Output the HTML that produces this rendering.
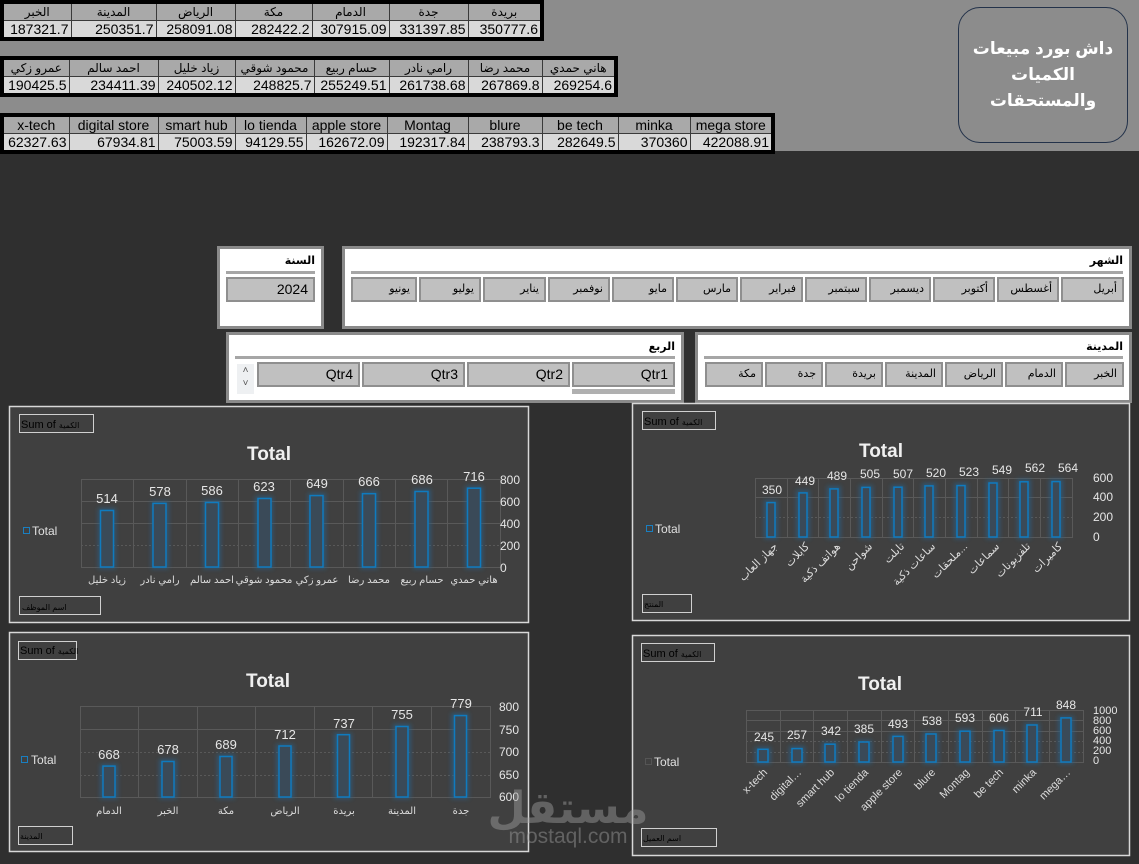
<!DOCTYPE html>
<html><head><meta charset="utf-8">
<style>
*{margin:0;padding:0;box-sizing:border-box}
body{width:1139px;height:864px;background:#2f2f2f;position:relative;overflow:hidden;font-family:"Liberation Sans","DejaVu Sans",sans-serif}
.band{position:absolute;left:0;top:0;width:1139px;height:151px;background:#8c8c8c}
table{position:absolute;border-collapse:collapse;table-layout:fixed;border:4px solid #000;background:#000}
td{border:1px solid #3a3a3a;height:18px;padding:0 2px;font-size:14px;line-height:16px;white-space:nowrap;overflow:hidden;color:#000}
tr.h td{background:#a9a9a9;text-align:center;font-size:12px}
tr.v td{background:#d9d9d9;text-align:right}
tr.h.e td{font-size:14px}
.title{position:absolute;left:958px;top:7px;width:170px;height:136px;border:1px solid #23324a;border-radius:22px;color:#fff;font-weight:bold;font-size:17px;text-align:center;line-height:26px;padding-top:28px}
.sl{position:absolute;background:#fff;border:3px solid #8a8a8a}
.sl .hd{position:absolute;right:6px;top:5px;font-size:11px;font-weight:bold}
.sl .ln{position:absolute;left:6px;right:6px;height:3px;background:#a6a6a6}
.b{position:absolute;height:25px;background:#c0c0c0;border:2px solid #8f8f8f;font-size:11px;text-align:right;padding-right:5px;line-height:20px}
.b.q{font-size:14px}
</style></head><body>
<div class="band"></div>

<table style="left:0;top:0;width:544px">
<colgroup><col style="width:69px"><col style="width:85px"><col style="width:79px"><col style="width:77px"><col style="width:77px"><col style="width:79px"><col style="width:74px"></colgroup>
<tr class="h"><td>الخبر</td><td>المدينة</td><td>الرياض</td><td>مكة</td><td>الدمام</td><td>جدة</td><td>بريدة</td></tr>
<tr class="v"><td>187321.7</td><td>250351.7</td><td>258091.08</td><td>282422.2</td><td>307915.09</td><td>331397.85</td><td>350777.6</td></tr>
</table>

<table style="left:0;top:56px;width:616px">
<colgroup><col style="width:67px"><col style="width:89px"><col style="width:77px"><col style="width:79px"><col style="width:75px"><col style="width:79px"><col style="width:74px"><col style="width:74px"></colgroup>
<tr class="h"><td>عمرو زكي</td><td>احمد سالم</td><td>زياد خليل</td><td>محمود شوقي</td><td>حسام ربيع</td><td>رامي نادر</td><td>محمد رضا</td><td>هاني حمدي</td></tr>
<tr class="v"><td>190425.5</td><td>234411.39</td><td>240502.12</td><td>248825.7</td><td>255249.51</td><td>261738.68</td><td>267869.8</td><td>269254.6</td></tr>
</table>

<table style="left:0;top:113px;width:773px">
<colgroup><col style="width:67px"><col style="width:89px"><col style="width:77px"><col style="width:71px"><col style="width:81px"><col style="width:81px"><col style="width:74px"><col style="width:76px"><col style="width:72px"><col style="width:83px"></colgroup>
<tr class="h e"><td>x-tech</td><td>digital store</td><td>smart hub</td><td>lo tienda</td><td>apple store</td><td>Montag</td><td>blure</td><td>be tech</td><td>minka</td><td>mega store</td></tr>
<tr class="v"><td>62327.63</td><td>67934.81</td><td>75003.59</td><td>94129.55</td><td>162672.09</td><td>192317.84</td><td>238793.3</td><td>282649.5</td><td>370360</td><td>422088.91</td></tr>
</table>

<div class="title">داش بورد مبيعات<br>الكميات<br>والمستحقات</div>

<div class="sl" style="left:217px;top:246px;width:107px;height:83px">
<div class="hd">السنة</div><div class="ln" style="top:22px"></div>
<div class="b q" style="left:6px;top:28px;width:89px">2024</div>
</div>
<div class="sl" style="left:342px;top:246px;width:790px;height:83px">
<div class="hd">الشهر</div><div class="ln" style="top:22px"></div>
<div class="b" style="left:716px;top:28px;width:63px">أبريل</div>
<div class="b" style="left:652px;top:28px;width:62px">أغسطس</div>
<div class="b" style="left:588px;top:28px;width:62px">أكتوبر</div>
<div class="b" style="left:524px;top:28px;width:62px">ديسمبر</div>
<div class="b" style="left:460px;top:28px;width:62px">سبتمبر</div>
<div class="b" style="left:395px;top:28px;width:63px">فبراير</div>
<div class="b" style="left:331px;top:28px;width:62px">مارس</div>
<div class="b" style="left:267px;top:28px;width:62px">مايو</div>
<div class="b" style="left:203px;top:28px;width:62px">نوفمبر</div>
<div class="b" style="left:138px;top:28px;width:63px">يناير</div>
<div class="b" style="left:74px;top:28px;width:62px">يوليو</div>
<div class="b" style="left:6px;top:28px;width:66px">يونيو</div>
</div>
<div class="sl" style="left:226px;top:332px;width:458px;height:71px">
<div class="hd">الربع</div><div class="ln" style="top:21px"></div>
<div style="position:absolute;left:8px;top:29px;width:17px;height:30px;background:#eef0f2;font-size:10px;color:#555;text-align:center;line-height:13px">˄<br>˅</div>
<div class="b q" style="left:343px;top:27px;width:103px">Qtr1</div>
<div class="b q" style="left:238px;top:27px;width:103px">Qtr2</div>
<div class="b q" style="left:133px;top:27px;width:103px">Qtr3</div>
<div class="b q" style="left:28px;top:27px;width:103px">Qtr4</div>
<div style="position:absolute;left:343px;top:54px;width:103px;height:5px;background:#b0b0b0"></div>
</div>
<div class="sl" style="left:695px;top:332px;width:437px;height:71px">
<div class="hd">المدينة</div><div class="ln" style="top:21px"></div>
<div class="b" style="left:367px;top:27px;width:59px">الخبر</div>
<div class="b" style="left:307px;top:27px;width:58px">الدمام</div>
<div class="b" style="left:247px;top:27px;width:58px">الرياض</div>
<div class="b" style="left:187px;top:27px;width:58px">المدينة</div>
<div class="b" style="left:127px;top:27px;width:58px">بريدة</div>
<div class="b" style="left:67px;top:27px;width:58px">جدة</div>
<div class="b" style="left:7px;top:27px;width:58px">مكة</div>
</div>

<svg style="position:absolute;left:0;top:0" width="1139" height="864" font-family="Liberation Sans, DejaVu Sans, sans-serif">
<defs><filter id="g" x="-100%" y="-20%" width="300%" height="140%"><feGaussianBlur stdDeviation="2"/></filter></defs>
<g fill="#404040" stroke="#d8d8d8" stroke-width="1.5">
<rect x="9.5" y="406.5" width="519" height="216"/>
<rect x="632.5" y="403.5" width="497" height="217"/>
<rect x="9.5" y="632.5" width="519" height="219"/>
<rect x="632.5" y="635.5" width="497" height="220"/>
</g>
<g fill="none" stroke="#d0d0d0" stroke-width="1">
<rect x="19.5" y="414.5" width="74" height="18"/><rect x="19.5" y="596.5" width="81" height="18"/>
<rect x="642.5" y="411.5" width="73" height="18"/><rect x="642.5" y="594.5" width="49" height="18"/>
<rect x="18.5" y="641.5" width="58" height="18"/><rect x="18.5" y="826.5" width="54" height="18"/>
<rect x="641.5" y="643.5" width="73" height="18"/><rect x="641.5" y="828.5" width="75" height="18"/>
</g>
<g font-size="11" fill="#000">
<text x="21" y="428">Sum of <tspan font-size="8">الكمية</tspan></text>
<text x="22" y="610" font-size="8">اسم الموظف</text>
<text x="644" y="425">Sum of <tspan font-size="8">الكمية</tspan></text>
<text x="644" y="607" font-size="8">المنتج</text>
<text x="20" y="654">Sum of <tspan font-size="8">الكمية</tspan></text>
<text x="20" y="839" font-size="8">المدينة</text>
<text x="643" y="657">Sum of <tspan font-size="8">الكمية</tspan></text>
<text x="643" y="841" font-size="8">اسم العميل</text>
</g>
<g font-weight="bold" font-size="19" fill="#f0f0f0" text-anchor="middle">
<text x="269" y="460">Total</text><text x="881" y="457">Total</text>
<text x="268" y="687">Total</text><text x="880" y="690">Total</text>
</g>
<g font-size="12" fill="#e0e0e0">
<rect x="23.5" y="527.5" width="6" height="6" fill="none" stroke="#1a7fc0"/><text x="32" y="535">Total</text>
<rect x="646.5" y="525.5" width="6" height="6" fill="none" stroke="#1a7fc0"/><text x="655" y="533">Total</text>
<rect x="21.5" y="756.5" width="6" height="6" fill="none" stroke="#1a7fc0"/><text x="31" y="764">Total</text>
<rect x="645.5" y="758.5" width="6" height="6" fill="none" stroke="#555"/><text x="654" y="766">Total</text>
</g>

<g stroke="#595959" stroke-width="1" fill="none">
<rect x="81.5" y="479.5" width="419" height="88"/>
<line x1="81" y1="501.5" x2="500" y2="501.5"/><line x1="81" y1="523.5" x2="500" y2="523.5"/><line x1="81" y1="545.5" x2="500" y2="545.5" stroke-dasharray="2,2"/>
<path d="M133.5 479V567M186.5 479V567M238.5 479V567M290.5 479V567M343.5 479V567M395.5 479V567M447.5 479V567"/>
</g>
<g fill="#2a5f85" filter="url(#g)" opacity=".7">
<rect x="98" y="508" width="18" height="61"/><rect x="151" y="501" width="18" height="68"/><rect x="203" y="500" width="18" height="69"/><rect x="255" y="496" width="18" height="73"/><rect x="308" y="493" width="18" height="76"/><rect x="360" y="491" width="18" height="78"/><rect x="413" y="489" width="18" height="80"/><rect x="465" y="486" width="18" height="83"/>
</g>
<g fill="#3a4a58" stroke="#0f7bbf" stroke-width="1.5">
<rect x="100.5" y="510.5" width="13" height="56.5"/><rect x="153" y="503.4" width="13" height="63.6"/><rect x="205.5" y="502.5" width="13" height="64.5"/><rect x="258" y="498.5" width="13" height="68.5"/><rect x="310" y="495.6" width="13" height="71.4"/><rect x="362.5" y="493.7" width="13" height="73.3"/><rect x="415" y="491.5" width="13" height="75.5"/><rect x="467.5" y="488.2" width="13" height="78.8"/>
</g>
<g font-size="13" fill="#e6e6e6" text-anchor="middle">
<text x="107" y="503">514</text><text x="160" y="496">578</text><text x="212" y="495">586</text><text x="264" y="491">623</text><text x="317" y="488">649</text><text x="369" y="486">666</text><text x="422" y="484">686</text><text x="474" y="481">716</text>
</g>
<g font-size="12" fill="#e6e6e6">
<text x="500" y="484">800</text><text x="500" y="506">600</text><text x="500" y="528">400</text><text x="500" y="550">200</text><text x="500" y="572">0</text>
</g>
<g font-size="10" fill="#dcdcdc" text-anchor="middle">
<text x="107" y="583">زياد خليل</text><text x="160" y="583">رامي نادر</text><text x="212" y="583">احمد سالم</text><text x="264" y="583">محمود شوقي</text><text x="317" y="583">عمرو زكي</text><text x="369" y="583">محمد رضا</text><text x="422" y="583">حسام ربيع</text><text x="474" y="583">هاني حمدي</text>
</g>

<g stroke="#595959" stroke-width="1" fill="none">
<rect x="755.5" y="478.5" width="317" height="59"/>
<line x1="755" y1="497.5" x2="1072" y2="497.5"/><line x1="755" y1="517.5" x2="1072" y2="517.5" stroke-dasharray="2,2"/>
<path d="M787.5 478V537M818.5 478V537M850.5 478V537M882.5 478V537M913.5 478V537M945.5 478V537M977.5 478V537M1008.5 478V537M1040.5 478V537"/>
</g>
<g fill="#2a5f85" filter="url(#g)" opacity=".7">
<rect x="764" y="500" width="14" height="39"/><rect x="796" y="490" width="14" height="49"/><rect x="827" y="486" width="14" height="53"/><rect x="859" y="485" width="14" height="54"/><rect x="891" y="485" width="14" height="54"/><rect x="922" y="483" width="14" height="56"/><rect x="954" y="483" width="14" height="56"/><rect x="986" y="480" width="14" height="59"/><rect x="1017" y="479" width="14" height="60"/><rect x="1049" y="479" width="14" height="60"/>
</g>
<g fill="#3a4a58" stroke="#0f7bbf" stroke-width="1.5">
<rect x="767" y="502.6" width="8" height="34.4"/><rect x="799" y="492.9" width="8" height="44.1"/><rect x="830" y="488.9" width="8" height="48.1"/><rect x="862" y="487.4" width="8" height="49.6"/><rect x="894" y="487.2" width="8" height="49.8"/><rect x="925" y="485.9" width="8" height="51.1"/><rect x="957" y="485.6" width="8" height="51.4"/><rect x="989" y="483" width="8" height="54"/><rect x="1020" y="481.8" width="8" height="55.2"/><rect x="1052" y="481.6" width="8" height="55.4"/>
</g>
<g font-size="12" fill="#e6e6e6" text-anchor="middle">
<text x="772" y="494">350</text><text x="805" y="485">449</text><text x="837" y="480">489</text><text x="870" y="478">505</text><text x="903" y="478">507</text><text x="936" y="477">520</text><text x="969" y="476">523</text><text x="1002" y="474">549</text><text x="1035" y="472">562</text><text x="1068" y="472">564</text>
</g>
<g font-size="12" fill="#e6e6e6">
<text x="1093" y="482">600</text><text x="1093" y="501">400</text><text x="1093" y="521">200</text><text x="1093" y="541">0</text>
</g>
<g font-size="11" fill="#dcdcdc" text-anchor="end">
<text transform="translate(778,547) rotate(-45)">جهاز العاب</text>
<text transform="translate(810,547) rotate(-45)">كابلات</text>
<text transform="translate(841,547) rotate(-45)">هواتف ذكية</text>
<text transform="translate(873,547) rotate(-45)">شواحن</text>
<text transform="translate(905,547) rotate(-45)">تابلت</text>
<text transform="translate(936,547) rotate(-45)">ساعات ذكية</text>
<text transform="translate(968,547) rotate(-45)">ملحقات...</text>
<text transform="translate(1000,547) rotate(-45)">سماعات</text>
<text transform="translate(1031,547) rotate(-45)">تلفزيونات</text>
<text transform="translate(1063,547) rotate(-45)">كاميرات</text>
</g>

<g stroke="#595959" stroke-width="1" fill="none">
<rect x="80.5" y="706.5" width="410" height="91"/>
<line x1="80" y1="729.5" x2="490" y2="729.5"/><line x1="80" y1="752.5" x2="490" y2="752.5" stroke-dasharray="2,2"/><line x1="80" y1="775.5" x2="490" y2="775.5" stroke-dasharray="2,2"/>
<path d="M138.5 706V797M197.5 706V797M255.5 706V797M314.5 706V797M372.5 706V797M431.5 706V797"/>
</g>
<g fill="#2a5f85" filter="url(#g)" opacity=".7">
<rect x="100" y="764" width="18" height="35"/><rect x="159" y="759" width="18" height="40"/><rect x="217" y="754" width="18" height="45"/><rect x="276" y="744" width="18" height="55"/><rect x="334" y="733" width="18" height="66"/><rect x="393" y="724" width="18" height="75"/><rect x="451" y="713" width="18" height="86"/>
</g>
<g fill="#3a4a58" stroke="#0f7bbf" stroke-width="1.5">
<rect x="103" y="766.1" width="12" height="30.9"/><rect x="162" y="761.5" width="12" height="35.5"/><rect x="220" y="756.5" width="12" height="40.5"/><rect x="279" y="746" width="12" height="51"/><rect x="337.5" y="734.7" width="12" height="62.3"/><rect x="396" y="726.5" width="12" height="70.5"/><rect x="454.5" y="715.6" width="12" height="81.4"/>
</g>
<g font-size="13" fill="#e6e6e6" text-anchor="middle">
<text x="109" y="759">668</text><text x="168" y="754">678</text><text x="226" y="749">689</text><text x="285" y="739">712</text><text x="344" y="728">737</text><text x="402" y="719">755</text><text x="461" y="708">779</text>
</g>
<g font-size="12" fill="#e6e6e6">
<text x="499" y="711">800</text><text x="499" y="734">750</text><text x="499" y="756">700</text><text x="499" y="779">650</text><text x="499" y="801">600</text>
</g>
<g font-size="10" fill="#dcdcdc" text-anchor="middle">
<text x="109" y="814">الدمام</text><text x="168" y="814">الخبر</text><text x="226" y="814">مكة</text><text x="285" y="814">الرياض</text><text x="344" y="814">بريدة</text><text x="402" y="814">المدينة</text><text x="461" y="814">جدة</text>
</g>

<g stroke="#595959" stroke-width="1" fill="none">
<rect x="746.5" y="710.5" width="337" height="52"/>
<line x1="746" y1="720.5" x2="1083" y2="720.5"/><line x1="746" y1="731.5" x2="1083" y2="731.5"/><line x1="746" y1="741.5" x2="1083" y2="741.5" stroke-dasharray="2,2"/><line x1="746" y1="752.5" x2="1083" y2="752.5" stroke-dasharray="2,2"/>
<path d="M780.5 710V762M813.5 710V762M847.5 710V762M881.5 710V762M914.5 710V762M948.5 710V762M982.5 710V762M1015.5 710V762M1049.5 710V762"/>
</g>
<g fill="#2a5f85" filter="url(#g)" opacity=".7">
<rect x="755" y="747" width="16" height="17"/><rect x="789" y="746" width="16" height="18"/><rect x="822" y="742" width="16" height="22"/><rect x="856" y="740" width="16" height="24"/><rect x="890" y="734" width="16" height="30"/><rect x="923" y="732" width="16" height="32"/><rect x="957" y="729" width="16" height="35"/><rect x="991" y="728" width="16" height="36"/><rect x="1024" y="723" width="16" height="41"/><rect x="1058" y="716" width="16" height="48"/>
</g>
<g fill="#3a4a58" stroke="#0f7bbf" stroke-width="1.5">
<rect x="758" y="749.3" width="10" height="12.7"/><rect x="792" y="748.6" width="10" height="13.4"/><rect x="825" y="744.2" width="10" height="17.8"/><rect x="859" y="742" width="10" height="20"/><rect x="893" y="736.4" width="10" height="25.6"/><rect x="926" y="734" width="10" height="28"/><rect x="960" y="731.2" width="10" height="30.8"/><rect x="994" y="730.5" width="10" height="31.5"/><rect x="1027" y="725" width="10" height="37"/><rect x="1061" y="717.9" width="10" height="44.1"/>
</g>
<g font-size="12" fill="#e6e6e6" text-anchor="middle">
<text x="764" y="741">245</text><text x="797" y="739">257</text><text x="831" y="735">342</text><text x="864" y="733">385</text><text x="898" y="728">493</text><text x="932" y="725">538</text><text x="965" y="722">593</text><text x="999" y="722">606</text><text x="1033" y="716">711</text><text x="1066" y="709">848</text>
</g>
<g font-size="11" fill="#e6e6e6">
<text x="1093" y="714">1000</text><text x="1093" y="724">800</text><text x="1093" y="734">600</text><text x="1093" y="744">400</text><text x="1093" y="754">200</text><text x="1093" y="764">0</text>
</g>
<g font-size="11" fill="#dcdcdc" text-anchor="end">
<text transform="translate(768,773) rotate(-45)">x-tech</text>
<text transform="translate(802,773) rotate(-45)">digital…</text>
<text transform="translate(835,773) rotate(-45)">smart hub</text>
<text transform="translate(869,773) rotate(-45)">lo tienda</text>
<text transform="translate(903,773) rotate(-45)">apple store</text>
<text transform="translate(936,773) rotate(-45)">blure</text>
<text transform="translate(970,773) rotate(-45)">Montag</text>
<text transform="translate(1004,773) rotate(-45)">be tech</text>
<text transform="translate(1037,773) rotate(-45)">minka</text>
<text transform="translate(1071,773) rotate(-45)">mega…</text>
</g>

<g fill="#a0a0a0" opacity=".45" text-anchor="middle">
<text x="568" y="823" font-size="44" font-weight="bold">مستقل</text>
<text x="568" y="843" font-size="21">mostaql.com</text>
</g>
</svg>
</body></html>
